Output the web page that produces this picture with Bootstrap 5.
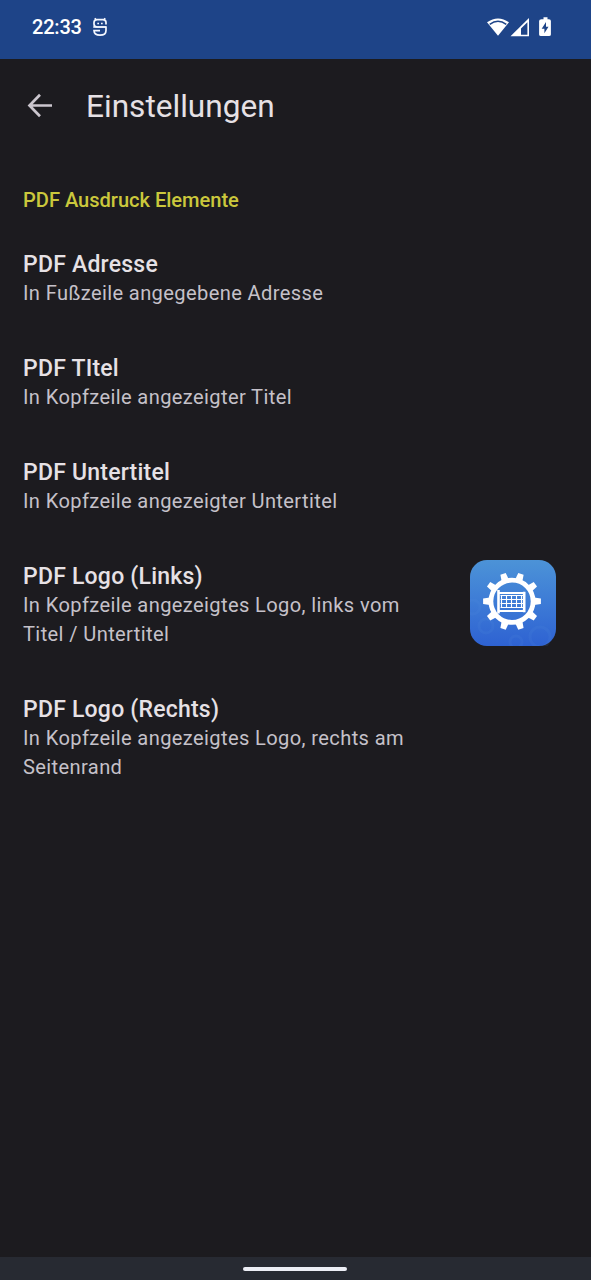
<!DOCTYPE html>
<html lang="de" data-bs-theme="dark">
<head>
<meta charset="utf-8">
<meta name="viewport" content="width=device-width, initial-scale=1">
<title>Einstellungen</title>
<link href="https://cdn.jsdelivr.net/npm/bootstrap@5.3.0/dist/css/bootstrap.min.css" rel="stylesheet">
<style>
  body { background: #1c1b1f; color: #e6e1e5; font-family: Roboto, "Liberation Sans", sans-serif; overflow: hidden; }
  .status-bar { height: 59px; background: #1e4488; padding: 0 39px 5px 32px; color: #fff; }
  .clock { font-size: 20px; font-weight: 500; line-height: 24px; letter-spacing: -.2px; }
  .app-bar { height: 96px; padding: 0 27px; gap: 33px; }
  .back-icon { margin-bottom: 2px; }
  .app-title { color: #e6e1e5; font-size: 31.6px; font-weight: 400; line-height: 40px; letter-spacing: 0; }
  .section-label { color: #cbc83c; font-size: 20.1px; font-weight: 500; line-height: 29px; letter-spacing: -.03px; margin: 31px 0 34.500px; }
  .settings { padding: 0 35px 0 23px; }
  .setting { margin-bottom: 46.4px; }
  .setting-text { width: 400px; }
  .setting-title { font-size: 23px; font-weight: 500; line-height: 29px; letter-spacing: .22px; }
  .setting-info { color: #c5c1c9; font-size: 20.1px; line-height: 28.75px; letter-spacing: .375px; }
  .app-logo { margin: -2.2px 0 -10px; }
  .gesture-bar { height: 23px; background: #272a32; padding: 1px 1px 0 0; }
  .gesture-handle { width: 104px; height: 4px; background: #eceef5; }
</style>
</head>
<body>
<div class="d-flex flex-column vh-100">
  <header class="status-bar d-flex align-items-center justify-content-between flex-shrink-0">
    <div class="d-flex align-items-center">
      <span class="clock">22:33</span>
      <svg class="ms-2" width="20" height="22" viewBox="0 0 20 22" fill="none" stroke="#f4f7ff" stroke-width="1.700">
        <path d="M16 11H7.300Q4 11 4 8V6.500Q4 3.600 7.300 3.600H12.700Q16 3.600 16 6.500V8.500M4.800 2.300 6.300 4M15.200 2.300 13.700 4"/>
        <path d="M3.200 11H16V14.500Q16 19.200 10 19.200Q4 19.200 4 14.600H10"/>
        <path d="M7.300 7.400H9M11 7.400H12.700" stroke-width="1.500"/>
      </svg>
    </div>
    <div class="d-flex align-items-center">
      <svg width="65" height="22" viewBox="0 0 65 22">
        <path fill="#fff" d="M0 6.300Q11 -1.500 22 6.300L11 19.800Z"/>
        <path fill="none" stroke="#1e4488" stroke-width="1.500" d="M2.700 8.300Q11 2.300 19.300 8.300"/>
        <path fill="#fff" fill-rule="evenodd" d="M23.500 20.300 42 2V20.300ZM34 18.700H40.400V6.200L34 12.500Z"/>
        <path fill="#fff" d="M54.500 3.300H56.500V1.300H60.500V3.300H62Q63.900 3.300 63.900 5V18.500Q63.900 20 62 20H54Q52.100 20 52.100 18.500V5Q52.100 3.300 54.500 3.300Z"/>
        <path fill="#1e4488" d="M59 6 54.700 12.700H57.400V17.200L61.500 10.700H59Z"/>
      </svg>
    </div>
  </header>

  <nav class="app-bar d-flex align-items-center flex-shrink-0">
    <svg class="back-icon" width="26" height="26" viewBox="0 0 26 26" fill="none" stroke="#cbc6ce" stroke-width="2.700"><path d="M25 12.500H3M13 1.800 2.500 12.500 13 23.200"/></svg>
    <h1 class="app-title mb-0">Einstellungen</h1>
  </nav>

  <main class="settings flex-grow-1">
    <h2 class="section-label">PDF Ausdruck Elemente</h2>
    <div class="setting">
      <div class="setting-title">PDF Adresse</div>
      <div class="setting-info">In Fußzeile angegebene Adresse</div>
    </div>
    <div class="setting">
      <div class="setting-title">PDF TItel</div>
      <div class="setting-info">In Kopfzeile angezeigter Titel</div>
    </div>
    <div class="setting">
      <div class="setting-title">PDF Untertitel</div>
      <div class="setting-info">In Kopfzeile angezeigter Untertitel</div>
    </div>
    <div class="setting d-flex justify-content-between align-items-start">
      <div class="setting-text">
        <div class="setting-title">PDF Logo (Links)</div>
        <div class="setting-info">In Kopfzeile angezeigtes Logo, links vom Titel / Untertitel</div>
      </div>
      <svg class="app-logo" width="86" height="86" viewBox="0 0 86 86">
        <defs>
          <linearGradient id="sky" x1="0" y1="0" x2="0" y2="1"><stop offset="0" stop-color="#4c93d7"/><stop offset=".5" stop-color="#3d7bd6"/><stop offset="1" stop-color="#2e62d2"/></linearGradient>
          <path id="tooth" d="M-3.700 -22 -2.800 -28.900H2.800L3.700 -22Z"/>
        </defs>
        <rect width="86" height="86" rx="17" fill="url(#sky)"/>
        <g fill="none" stroke="#5e96e2" stroke-opacity=".12" stroke-width="3"><circle cx="3" cy="47" r="7"/><circle cx="16" cy="66" r="7"/><circle cx="70" cy="77" r="10"/><circle cx="46" cy="82" r="6"/></g>
        <g transform="translate(42 41.300)" fill="#fff">
          <circle r="21.100" fill="none" stroke="#fff" stroke-width="4.800"/>
          <use href="#tooth" transform="rotate(18)"/><use href="#tooth" transform="rotate(54)"/><use href="#tooth" transform="rotate(90)"/><use href="#tooth" transform="rotate(126)"/><use href="#tooth" transform="rotate(162)"/><use href="#tooth" transform="rotate(198)"/><use href="#tooth" transform="rotate(234)"/><use href="#tooth" transform="rotate(270)"/><use href="#tooth" transform="rotate(306)"/><use href="#tooth" transform="rotate(342)"/>
        </g>
        <path fill="none" stroke="#fff" stroke-width="2.600" d="M28.500 30V53.500M54.200 31.700V52.300"/>
        <path fill="none" stroke="#fff" stroke-width="2" d="M28 33H54.500M28 51H54.500"/>
        <path fill="none" stroke="#fff" stroke-width="1.100" d="M30.500 35.500H53M30.500 39.500H53M30.500 43.500H53M30.500 47.500H53M31.500 35V48M36.500 35V48M41.500 35V48M46.500 35V48M51.500 35V48"/>
      </svg>
    </div>
    <div class="setting">
      <div class="setting-text">
        <div class="setting-title">PDF Logo (Rechts)</div>
        <div class="setting-info">In Kopfzeile angezeigtes Logo, rechts am Seitenrand</div>
      </div>
    </div>
  </main>

  <footer class="gesture-bar d-flex align-items-center justify-content-center flex-shrink-0"><div class="gesture-handle rounded-pill"></div></footer>
</div>
<script src="https://cdn.jsdelivr.net/npm/bootstrap@5.3.0/dist/js/bootstrap.bundle.min.js"></script>
</body>
</html>
